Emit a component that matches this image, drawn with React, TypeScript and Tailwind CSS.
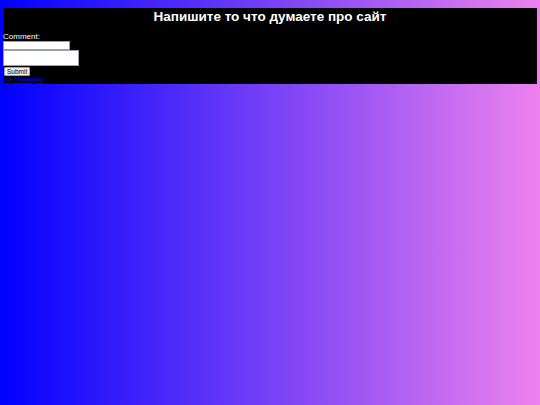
export default function App() {
  return (
    <div className="min-h-[405px] w-full bg-[linear-gradient(to_right,#0000ff,#ee82ee)] pt-2 px-[3px] font-['Liberation_Sans',Arial,sans-serif]">
      <div className="bg-black text-white h-[76px]">
        <h1 className="text-center font-bold text-[13.5px] leading-[16px] pt-[1px]">
          Напишите то что думаете про сайт
        </h1>
        <form className="mt-[8px] flex flex-col items-start text-[8px] leading-[8px]">
          <label>Comment:</label>
          <input
            type="text"
            className="w-[67px] h-[9px] bg-white border border-gray-400"
          />
          <textarea className="w-[76px] h-[16px] bg-white border border-gray-400 resize-none" />
          <button
            type="button"
            className="mt-[1px] ml-[1px] h-[9px] px-[2px] bg-[#efefef] text-black text-[6.5px] leading-[7px] border border-gray-400 rounded-[1px]"
          >
            Submit
          </button>
          <a href="#" className="text-[#0000ee] underline text-[7.5px] leading-[8px]">
            На главную
          </a>
        </form>
      </div>
    </div>
  );
}
